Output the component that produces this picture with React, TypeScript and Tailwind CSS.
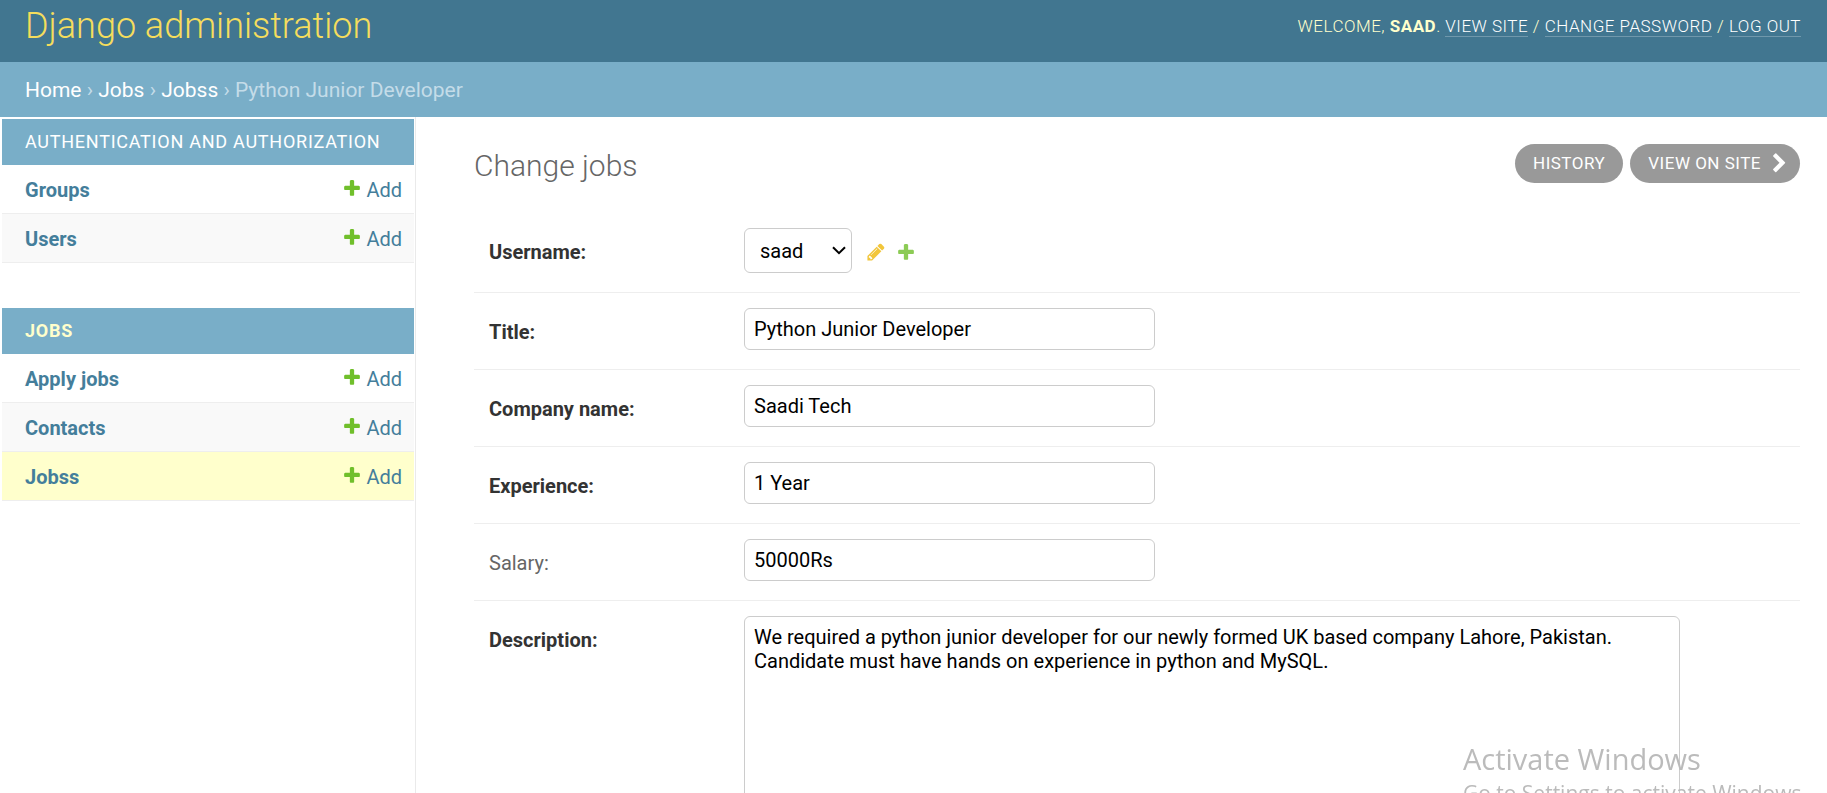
import React from "react";

const PLUS_PATH =
  "M1600 796v192q0 40-28 68t-68 28h-416v416q0 40-28 68t-68 28h-192q-40 0-68-28t-28-68v-416h-416q-40 0-68-28t-28-68v-192q0-40 28-68t68-28h416v-416q0-40 28-68t68-28h192q40 0 68 28t28 68v416h416q40 0 68 28t28 68z";

function PlusIcon({ className }: { className: string }) {
  return (
    <svg viewBox="0 0 1792 1792" aria-hidden="true" className={className}>
      <path d={PLUS_PATH} />
    </svg>
  );
}

function PencilIcon({ className }: { className: string }) {
  return (
    <svg viewBox="0 0 1792 1792" aria-hidden="true" className={className}>
      <path d="M491 1536l91-91-235-235-91 91v107h128v128h107zm523-928q0-22-22-22-10 0-17 7l-542 542q-7 7-7 17 0 22 22 22 10 0 17-7l542-542q7-7 7-17zm-54-192l416 416-832 832h-416v-416zm683 96q0 53-37 90l-166 166-416-416 166-165q36-38 90-38 53 0 91 38l235 234q37 39 37 91z" />
    </svg>
  );
}

function ChevronIcon({ className }: { className: string }) {
  return (
    <svg viewBox="0 0 1792 1792" aria-hidden="true" className={className}>
      <path d="M1363 877l-742 742q-19 19-45 19t-45-19l-166-166q-19-19-19-45t19-45l531-531-531-531q-19-19-19-45t19-45l166-166q19-19 45-19t45 19l742 742q19 19 19 45t-19 45z" />
    </svg>
  );
}

type Model = { name: string; current?: boolean };

function NavModule({ title, models, current }: { title: string; models: Model[]; current?: boolean }) {
  return (
    <table className="mb-[45px] w-full border-separate border-spacing-0">
      <caption className="h-[46px] bg-[#79aec8] px-[23px] text-left text-[18px] leading-[46px] tracking-[0.75px] text-white uppercase">
        <a href="#" className={current ? "font-bold text-[#ffffcc]" : ""}>
          {title}
        </a>
      </caption>
      <tbody>
        {models.map((m) => (
          <tr key={m.name} className={m.current ? "bg-[#ffffcc]" : "even:bg-[#f9f9f9]"}>
            <th scope="row" className="h-[49px] border-b border-[#eee] pt-[2px] pl-[23px] text-left font-bold text-[#447e9b]">
              <a href="#">{m.name}</a>
            </th>
            <td className="border-b border-[#eee] pt-[2px] pr-3">
              <a href="#" className="flex items-center justify-end gap-1 text-[#447e9b]">
                <PlusIcon className="mb-1 size-5 fill-[#70bf2b]" />
                Add
              </a>
            </td>
          </tr>
        ))}
      </tbody>
    </table>
  );
}

function Row({ id, label, optional, children }: { id: string; label: string; optional?: boolean; children: React.ReactNode }) {
  return (
    <div className="flex items-start border-b border-[#eee] px-[15px] pt-[15px] pb-[19px]">
      <label
        htmlFor={id}
        className={
          optional
            ? "w-[255px] shrink-0 pt-3 leading-6 text-[#666]"
            : "w-[255px] shrink-0 pt-3 leading-6 font-bold text-[#333]"
        }
      >
        {label}
      </label>
      {children}
    </div>
  );
}

const FIELDS = [
  { id: "title", label: "Title:", value: "Python Junior Developer" },
  { id: "company", label: "Company name:", value: "Saadi Tech" },
  { id: "experience", label: "Experience:", value: "1 Year" },
  { id: "salary", label: "Salary:", value: "50000Rs", optional: true },
];

const TOOL_LINK = "border-b border-white/25 text-white";

export default function App() {
  return (
    <div className="flex h-screen flex-col overflow-hidden bg-white font-[Roboto,sans-serif] text-[20px] leading-6 text-[#333]">
      <header className="flex h-[62px] shrink-0 items-start justify-between bg-[#417690] pt-1 pr-[26px] pl-[25px]">
        <h1 className="text-[36px] leading-[44px] font-light text-[#f5dd5d]">
          <a href="#">Django administration</a>
        </h1>
        <div className="pt-3 text-[17px] leading-5 font-light tracking-[0.5px] text-[#ffffcc] uppercase">
          Welcome, <strong className="font-bold">saad</strong>.{" "}
          <a href="#" className={TOOL_LINK}>View site</a> /{" "}
          <a href="#" className={TOOL_LINK}>Change password</a> /{" "}
          <a href="#" className={TOOL_LINK}>Log out</a>
        </div>
      </header>

      <nav aria-label="Breadcrumbs" className="h-[55px] shrink-0 bg-[#79aec8] px-[25px] text-[21px] leading-[57px] text-[#c4dce8]">
        <a href="#" className="text-white">Home</a> › <a href="#" className="text-white">Jobs</a> ›{" "}
        <a href="#" className="text-white">Jobss</a> › Python Junior Developer
      </nav>

      <div className="flex min-h-0 flex-1">
        <nav aria-label="Sidebar" className="w-[416px] shrink-0 border-r border-[#eaeaea] pt-[2px] pr-px pl-[2px]">
          <NavModule title="Authentication and Authorization" models={[{ name: "Groups" }, { name: "Users" }]} />
          <NavModule
            title="Jobs"
            current
            models={[{ name: "Apply jobs" }, { name: "Contacts" }, { name: "Jobss", current: true }]}
          />
        </nav>

        <main className="min-w-0 flex-1 pt-[27px] pr-[27px] pl-[58px]">
          <div className="flex items-start justify-between">
            <h2 className="text-[30px] leading-[44px] font-light text-[#666]">Change jobs</h2>
            <div className="flex gap-[7px] text-[17px] leading-[38px] tracking-[0.5px] text-white uppercase">
              <a href="#" className="h-[39px] rounded-full bg-[#999] px-[18px]">History</a>
              <a href="#" className="flex h-[39px] gap-2 rounded-full bg-[#999] pr-[10px] pl-[18px]">
                View on site
                <ChevronIcon className="size-[21px] self-center fill-white" />
              </a>
            </div>
          </div>

          <form className="mt-[25px]">
            <Row id="username" label="Username:">
              <div className="flex items-center">
                <div className="grid items-center">
                  <select
                    id="username"
                    className="col-start-1 row-start-1 h-[45px] w-[108px] appearance-none rounded-[6px] border border-[#ccc] bg-white pl-[15px] text-black"
                  >
                    <option>saad</option>
                  </select>
                  <svg
                    viewBox="0 0 14 9"
                    aria-hidden="true"
                    className="pointer-events-none col-start-1 row-start-1 mr-[6px] h-[9px] w-[14px] justify-self-end fill-none stroke-black stroke-2"
                  >
                    <path d="M1 1.2 7 7.2 13 1.2" />
                  </svg>
                </div>
                <a href="#" aria-label="Change selected user" className="mt-[2px] ml-[14px]">
                  <PencilIcon className="size-5 fill-[#efb80b] opacity-80" />
                </a>
                <a href="#" aria-label="Add another user" className="mt-[2px] ml-[10px]">
                  <PlusIcon className="size-5 fill-[#70bf2b] opacity-80" />
                </a>
              </div>
            </Row>
            {FIELDS.map((f) => (
              <Row key={f.id} id={f.id} label={f.label} optional={f.optional}>
                <input
                  id={f.id}
                  type="text"
                  defaultValue={f.value}
                  className="h-[42px] w-[411px] rounded-[6px] border border-[#ccc] px-[9px] text-black"
                />
              </Row>
            ))}
            <Row id="description" label="Description:">
              <textarea
                id="description"
                rows={10}
                defaultValue={
                  "We required a python junior developer for our newly formed UK based company Lahore, Pakistan.\nCandidate must have hands on experience in python and MySQL."
                }
                className="w-full max-w-[936px] rounded-[6px] border border-[#ccc] px-[9px] py-2 text-black"
              />
            </Row>
          </form>
        </main>
      </div>

      <aside className="pointer-events-none fixed right-5 -bottom-4 font-['Open_Sans',sans-serif] text-[#bbb]">
        <p className="text-[29px] leading-9">Activate Windows</p>
        <p className="text-[21px] leading-8">Go to Settings to activate Windows.</p>
      </aside>
    </div>
  );
}
